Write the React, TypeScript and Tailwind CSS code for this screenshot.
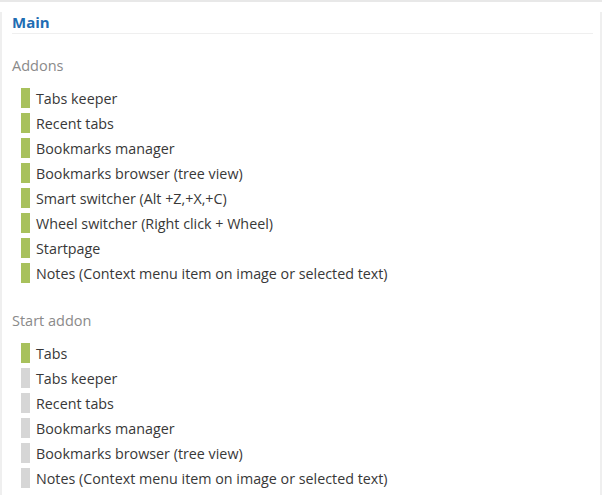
const addons = [
  "Tabs keeper",
  "Recent tabs",
  "Bookmarks manager",
  "Bookmarks browser (tree view)",
  "Smart switcher (Alt +Z,+X,+C)",
  "Wheel switcher (Right click + Wheel)",
  "Startpage",
  "Notes (Context menu item on image or selected text)",
];

const startAddon = [
  { label: "Tabs", on: true },
  { label: "Tabs keeper", on: false },
  { label: "Recent tabs", on: false },
  { label: "Bookmarks manager", on: false },
  { label: "Bookmarks browser (tree view)", on: false },
  { label: "Notes (Context menu item on image or selected text)", on: false },
];

function Item({ label, on }: { label: string; on: boolean }) {
  return (
    <li className="flex items-center h-[20px] gap-[6px]">
      <span className={on ? "ml-[9px] w-[9px] h-[20px] bg-[#a8c15c]" : "ml-[9px] w-[9px] h-[20px] bg-[#d6d6d6]"} />
      <span className="pt-[2px] text-[14.3px] leading-[20px] text-[#383838]">{label}</span>
    </li>
  );
}

export default function App() {
  return (
    <div className="w-[602px] h-[495px] bg-white border-t-2 border-[#e8e8e8] font-['Segoe_UI','Open_Sans',sans-serif] overflow-hidden">
      <div className="h-full border-x-2 border-[#efefef] pl-[10px] pr-[7px]">
        {/* header */}
        <h2 className="mt-[10px] pb-[1px] text-[15px] leading-[20px] font-bold text-[#1f6db3] border-b border-[#efefef]">
          Main
        </h2>

        <h3 className="mt-[22px] text-[14.5px] leading-[20px] text-[#8a8a8a]">Addons</h3>
        <ul className="mt-[12px] flex flex-col gap-[5px]">
          {addons.map((a) => (
            <Item key={a} label={a} on />
          ))}
        </ul>

        <h3 className="mt-[28px] text-[14.5px] leading-[20px] text-[#8a8a8a]">Start addon</h3>
        <ul className="mt-[12px] flex flex-col gap-[5px]">
          {startAddon.map((a) => (
            <Item key={a.label} label={a.label} on={a.on} />
          ))}
        </ul>
      </div>
    </div>
  );
}
